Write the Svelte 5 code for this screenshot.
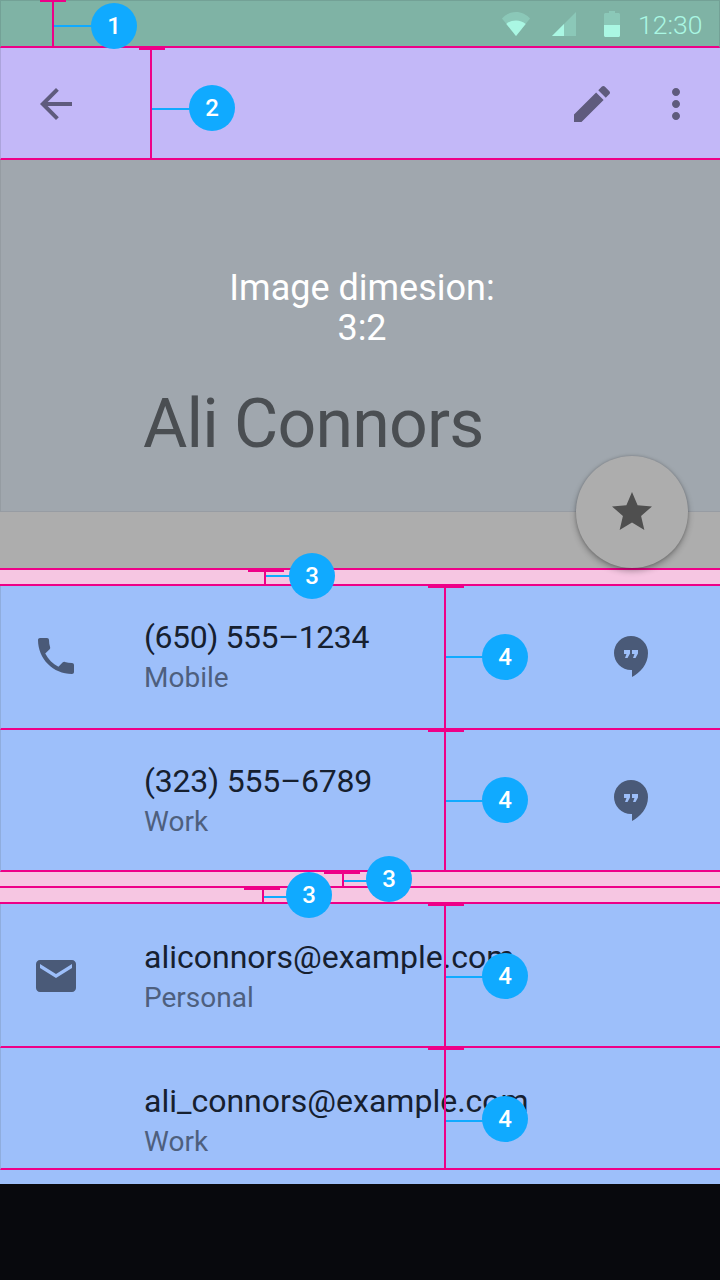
<script>
  const marks = [
    { x: 53, top: 0, h: 46, cl: 40, cap: 26, ly: 26, lw: 40, bx: 114, by: 26, n: 1 },
    { x: 151, top: 48, h: 110, cl: 139, cap: 26, ly: 109, lw: 40, bx: 212, by: 108, n: 2 },
    { x: 265, top: 570, h: 14, cl: 248, cap: 36, ly: 576, lw: 26, bx: 312, by: 576, n: 3 },
    { x: 445, top: 586, h: 142, cl: 428, cap: 36, ly: 657, lw: 40, bx: 505, by: 657, n: 4 },
    { x: 445, top: 730, h: 140, cl: 428, cap: 36, ly: 801, lw: 40, bx: 505, by: 800, n: 4 },
    { x: 343, top: 872, h: 14, cl: 324, cap: 36, ly: 881, lw: 24, bx: 389, by: 879, n: 3 },
    { x: 263, top: 888, h: 14, cl: 244, cap: 36, ly: 897, lw: 26, bx: 309, by: 895, n: 3 },
    { x: 445, top: 904, h: 142, cl: 428, cap: 36, ly: 977, lw: 40, bx: 505, by: 976, n: 4 },
    { x: 445, top: 1048, h: 120, cl: 428, cap: 36, ly: 1121, lw: 40, bx: 505, by: 1119, n: 4 }
  ];
</script>

<div class="screen">
  <header class="status">
    <svg class="wifi" width="28" height="24" viewBox="0 0 28 24">
      <path class="dim" d="M14 24 0 6.500C3.600 2.600 8.600 0 14 0s10.400 2.600 14 6.500z" />
      <path d="M14 24 4.300 11.900C6.900 9.700 10.300 8.400 14 8.400s7.100 1.300 9.700 3.500z" />
    </svg>
    <svg class="signal" width="24" height="24" viewBox="0 0 24 24">
      <path class="dim" d="M24 0v24H0z" />
      <path d="M12 12v12H0z" />
    </svg>
    <svg class="battery" width="16" height="26" viewBox="0 0 16 26">
      <path class="dim" d="M5 0h6v2h3.500c.8 0 1.500.7 1.500 1.500V14H0V3.500C0 2.700.7 2 1.500 2H5z" />
      <path d="M0 14h16v10.500c0 .8-.7 1.500-1.500 1.500h-13C.7 26 0 25.300 0 24.500z" />
    </svg>
    <span class="time">12:30</span>
  </header>

  <nav class="appbar">
    <svg class="icon" viewBox="0 0 24 24"><path d="M20 11H7.830l5.590-5.590L12 4l-8 8 8 8 1.410-1.410L7.830 13H20v-2z" /></svg>
    <svg class="icon edit" viewBox="0 0 24 24"><path d="M3 17.250V21h3.750L17.810 9.940l-3.750-3.750L3 17.250zM20.710 7.040c.39-.39.39-1.020 0-1.410l-2.340-2.340c-.39-.39-1.020-.39-1.410 0l-1.830 1.830 3.750 3.750 1.830-1.830z" /></svg>
    <svg class="icon more" viewBox="0 0 24 24"><path d="M12 8c1.100 0 2-.9 2-2s-.9-2-2-2-2 .9-2 2 .9 2 2 2zm0 2c-1.100 0-2 .9-2 2s.9 2 2 2 2-.9 2-2-.9-2-2-2zm0 6c-1.100 0-2 .9-2 2s.9 2 2 2 2-.9 2-2-.9-2-2-2z" /></svg>
  </nav>

  <section class="hero">
    <div class="image">
      <p class="dim-label">Image dimesion:<br />3:2</p>
      <h1>Ali Connors</h1>
    </div>
    <div class="fab">
      <svg width="48" height="48" viewBox="0 0 24 24"><path d="M12 17.270 18.180 21l-1.640-7.030L22 9.240l-7.190-.61L12 2 9.190 8.630 2 9.240l5.460 4.730L5.820 21z" /></svg>
    </div>
  </section>

  <div class="gap"></div>

  <div class="row r1">
    <svg class="lead" viewBox="0 0 24 24"><path d="M6.620 10.790c1.440 2.830 3.760 5.140 6.590 6.590l2.200-2.200c.27-.27.67-.36 1.020-.24 1.120.37 2.330.57 3.570.57.55 0 1 .45 1 1V20c0 .55-.45 1-1 1-9.390 0-17-7.610-17-17 0-.55.45-1 1-1h3.500c.55 0 1 .45 1 1 0 1.250.2 2.450.57 3.570.11.35.03.74-.25 1.020l-2.200 2.200z" /></svg>
    <div class="text"><div class="title phone">(650) 555–1234</div><div class="sub">Mobile</div></div>
    <svg class="hang" viewBox="0 0 34 41"><path d="M17 0a17 17 0 0 0 0 34h1v7c8-4.500 16-12.500 16-24A17 17 0 0 0 17 0z" /><path class="q" d="M10 14h6v3.500L13.500 22H11l1.500-4H10zM18 14h6v3.500L21.500 22H19l1.500-4H18z" /></svg>
  </div>
  <div class="row r2">
    <div class="text indent"><div class="title phone alt">(323) 555–6789</div><div class="sub">Work</div></div>
    <svg class="hang" viewBox="0 0 34 41"><path d="M17 0a17 17 0 0 0 0 34h1v7c8-4.500 16-12.500 16-24A17 17 0 0 0 17 0z" /><path class="q" d="M10 14h6v3.500L13.500 22H11l1.500-4H10zM18 14h6v3.500L21.500 22H19l1.500-4H18z" /></svg>
  </div>

  <div class="gap"></div>
  <div class="gap"></div>

  <div class="row r3">
    <svg class="lead" viewBox="0 0 24 24"><path d="M20 4H4c-1.100 0-1.990.9-1.990 2L2 18c0 1.100.9 2 2 2h16c1.100 0 2-.9 2-2V6c0-1.100-.9-2-2-2zm0 4-8 5-8-5V6l8 5 8-5v2z" /></svg>
    <div class="text"><div class="title">aliconnors@example.com</div><div class="sub">Personal</div></div>
  </div>
  <div class="row r4">
    <div class="text indent"><div class="title">ali_connors@example.com</div><div class="sub">Work</div></div>
  </div>

  <div class="tail"></div>
  <div class="nav"></div>

  {#each marks as m}
    <div class="stem" style="left:{m.x - 1}px;top:{m.top}px;height:{m.h}px"></div>
    <div class="cap" style="left:{m.cl}px;top:{m.top}px;width:{m.cap}px"></div>
    <div class="leader" style="left:{m.x + 1}px;top:{m.ly - 1}px;width:{m.lw}px"></div>
    <div class="badge" style="left:{m.bx - 23}px;top:{m.by - 23}px">{m.n}</div>
  {/each}
</div>

<style>
  :global(body) {
    margin: 0;
  }
  .screen {
    position: relative;
    width: 720px;
    height: 1280px;
    overflow: hidden;
    font-family: Roboto, "Liberation Sans", sans-serif;
    background: #08090d;
  }
  .status {
    box-sizing: border-box;
    height: 48px;
    display: flex;
    align-items: center;
    background: #7fb3a5;
    border: 1px solid #73a196;
    border-bottom: 2px solid #ee0088;
    color: #aaf7e3;
  }
  .status svg {
    fill: #aaf7e3;
    flex: none;
  }
  .status .dim {
    opacity: 0.3;
  }
  .wifi {
    margin-left: 501px;
    margin-top: 1px;
  }
  .signal {
    margin-left: 22px;
    margin-top: 1px;
  }
  .battery {
    margin-left: 28px;
    margin-top: 1px;
  }
  .time {
    margin-left: 18px;
    font-size: 26.500px;
    font-weight: 300;
    line-height: 46px;
    margin-top: 3px;
  }
  .appbar {
    box-sizing: border-box;
    height: 112px;
    display: flex;
    align-items: center;
    padding: 0 20px 0 32px;
    background: #c3b8f8;
    border-left: 1px solid #aca4dc;
    border-bottom: 2px solid #ee0088;
  }
  .icon {
    width: 48px;
    height: 48px;
    fill: #5f5b7d;
    flex: none;
    margin-left: -1px;
    margin-top: 2px;
  }
  .edit {
    margin-left: auto;
  }
  .more {
    margin-left: 36px;
  }
  .hero {
    position: relative;
    box-sizing: border-box;
    height: 410px;
    background: #adadad;
    border-bottom: 2px solid #ee0088;
  }
  .image {
    box-sizing: border-box;
    height: 352px;
    padding-top: 108px;
    background: #a0a7ae;
    border-bottom: 1px solid #979ca3;
    border-left: 1px solid #959ca2;
  }
  .dim-label {
    margin: 0 0 0 3px;
    text-align: center;
    font-size: 36px;
    line-height: 40px;
    color: #fff;
  }
  h1 {
    margin: 36px 0 0 142px;
    font-size: 68px;
    font-weight: 400;
    line-height: 80px;
    letter-spacing: -0.800px;
    color: #4a4e52;
  }
  .fab {
    position: absolute;
    left: 576px;
    top: 296px;
    width: 112px;
    height: 112px;
    border-radius: 50%;
    background: #adadad;
    display: flex;
    align-items: center;
    justify-content: center;
    box-shadow: 0 3px 6px rgba(0, 0, 0, 0.3), 0 0 3px rgba(0, 0, 0, 0.2);
  }
  .fab svg {
    fill: #4f4f4f;
  }
  .gap {
    box-sizing: border-box;
    height: 16px;
    background: #f6c6e2;
    border-bottom: 2px solid #ee0088;
  }
  .row {
    box-sizing: border-box;
    display: flex;
    align-items: flex-start;
    background: #9dbffa;
    border-left: 1px solid #8fadde;
    border-bottom: 2px solid #ee0088;
  }
  .r1 {
    height: 144px;
    padding-top: 31px;
  }
  .r2 {
    height: 142px;
    padding-top: 31px;
  }
  .r3 {
    height: 144px;
    padding-top: 33px;
  }
  .r4 {
    height: 122px;
    padding-top: 33px;
  }
  .lead {
    width: 48px;
    height: 48px;
    margin: 15px 0 0 31px;
    fill: #4a5a78;
    flex: none;
  }
  .text {
    margin-left: 64px;
  }
  .text.indent {
    margin-left: 143px;
  }
  .title {
    font-size: 32px;
    line-height: 40px;
    color: #16202f;
    white-space: nowrap;
  }
  .title.phone {
    letter-spacing: -0.420px;
  }
  .title.phone.alt {
    letter-spacing: -0.200px;
  }
  .sub {
    font-size: 28px;
    line-height: 40px;
    margin-top: 1px;
    color: #4e5f7e;
  }
  .hang {
    width: 34px;
    height: 41px;
    margin: 19px 72px 0 auto;
    fill: #4a5a78;
    flex: none;
  }
  .hang .q {
    fill: #9dbffa;
  }
  .tail {
    height: 14px;
    background: #9dbffa;
  }
  .nav {
    height: 96px;
    background: #08090d;
  }
  .stem {
    position: absolute;
    width: 2px;
    background: #ee0088;
  }
  .cap {
    position: absolute;
    height: 2px;
    background: #ee0088;
  }
  .leader {
    position: absolute;
    height: 2px;
    background: #10aaff;
  }
  .badge {
    position: absolute;
    width: 46px;
    height: 46px;
    border-radius: 50%;
    background: #10aaff;
    color: #fff;
    font-size: 24px;
    font-weight: 500;
    line-height: 46px;
    text-align: center;
  }
</style>
